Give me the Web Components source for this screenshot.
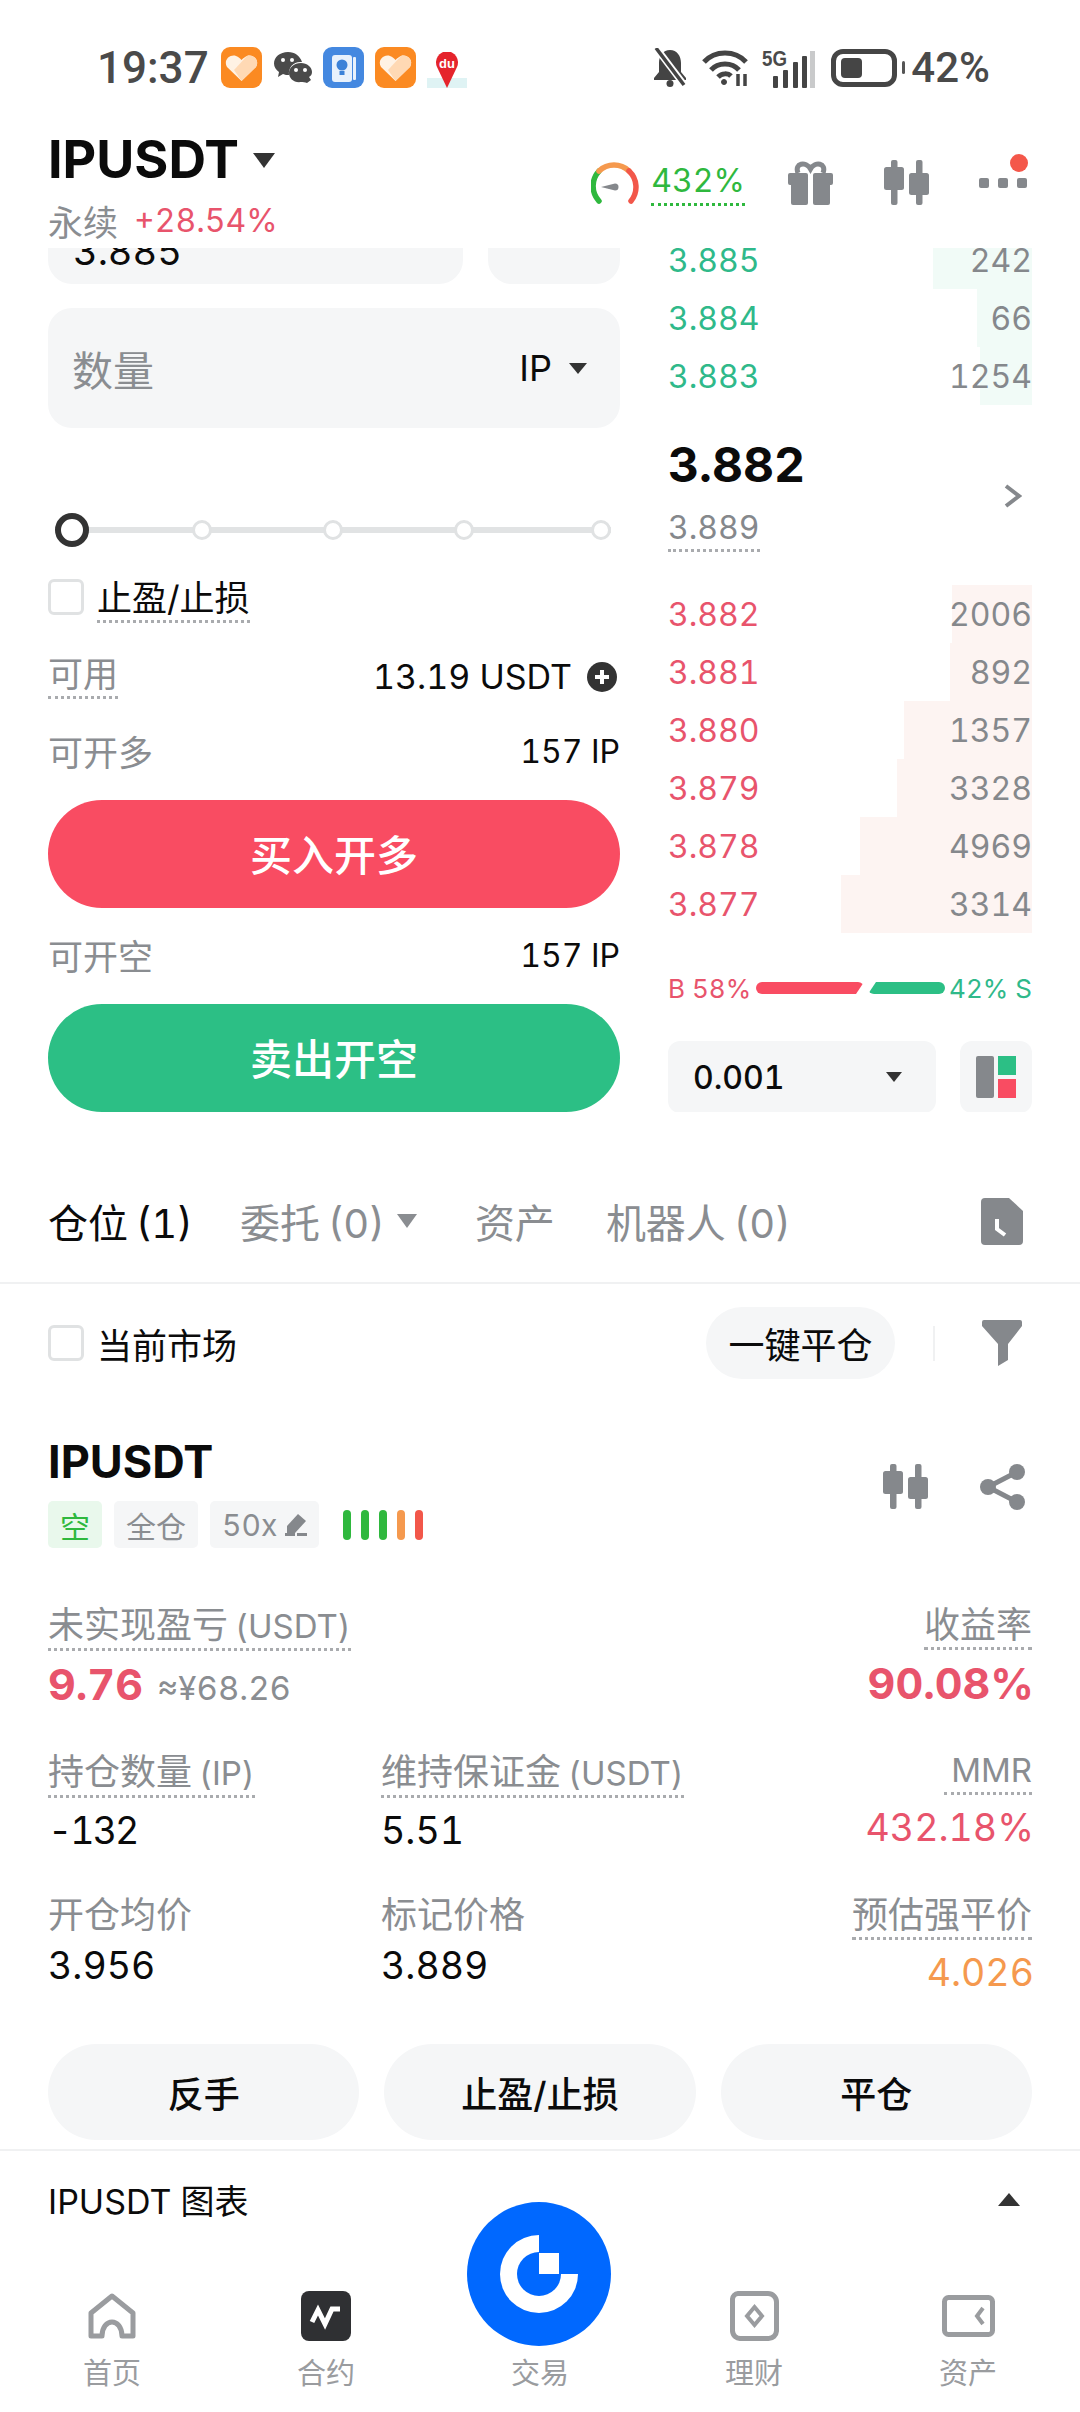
<!DOCTYPE html>
<html lang="zh">
<head>
<meta charset="utf-8">
<title>IPUSDT</title>
<style>
  html, body { margin: 0; background: #fff; }
  body {
    width: 1080px; height: 2412px; overflow: hidden;
    font-family: Inter, "Noto Sans CJK SC", sans-serif;
    font-variant-numeric: tabular-nums;
    color: #0b0b0b;
  }
</style>
</head>
<body>
<status-bar></status-bar>
<market-header></market-header>
<trade-panel>
  <trade-form slot="form"></trade-form>
  <order-book slot="book"></order-book>
</trade-panel>
<position-tabs></position-tabs>
<position-filter></position-filter>
<position-card></position-card>
<chart-toggle></chart-toggle>
<bottom-nav></bottom-nav>

<script>
const candleIcon = `<svg width="45" height="45" viewBox="0 0 45 45" fill="#85888c">
  <rect x="7" width="6.5" height="45" rx="2"/><rect y="7" width="20" height="23" rx="2.5"/>
  <rect x="32" width="6.5" height="45" rx="2"/><rect x="25" y="13" width="20" height="22" rx="2.5"/></svg>`;

const heartApp = `<svg width="41" height="41" viewBox="0 0 41 41">
  <rect width="41" height="41" rx="9" fill="#fb8a22"/>
  <path d="M20.5 34 L6 20 C2 13 9 7 15 9 C17.500 10 19 11 20.500 13 C22 11 24 10 26 9 C32 7 39 13 35 20Z" fill="#fff2e4"/>
  <path d="M20.500 34 L35 20 C39 13 32 7 26 9 L13 23Z" fill="#ffd9b4"/></svg>`;

// base class: subclasses return their shadow markup from markup()
class ShadowElement extends HTMLElement {
  constructor() {
    super();
    this.attachShadow({ mode: 'open' });
  }
  connectedCallback() {
    this.shadowRoot.innerHTML = this.markup();
  }
}

class DotLabel extends ShadowElement {
  markup() {
    return `<style>
      :host { display: inline-block; line-height: 42px; padding-bottom: 1px;
        border-bottom: 3px dotted var(--dot, #a9abae); }
    </style><slot></slot>`;
  }
}

class StatusBar extends ShadowElement {
  markup() {
    return `<style>
      :host { display: flex; height: 130px; padding: 47px 90px 0 97px; box-sizing: border-box;
        justify-content: space-between; align-items: flex-start;
        font-family: Roboto, sans-serif; font-weight: 500; font-size: 42px; color: #4a4a4a; }
      .side { display: flex; align-items: center; height: 41px; }
      .time { width: 124px; font-size: 44px; }
      .five { font: 700 22px/18px "Liberation Sans", sans-serif; transform: scaleX(.85); transform-origin: left;
        width: 24px; align-self: flex-start; margin: 3px 0 0 13px; }
      .batt { width: 66px; height: 38px; box-sizing: border-box; border: 5px solid #454545; border-radius: 12px;
        padding: 4px 5px; margin-left: 16px; }
      .batt i { display: block; width: 21px; height: 100%; background: #454545; border-radius: 4px; }
      .tip { width: 3px; height: 13px; background: #555; margin: 0 6px 0 5px; border-radius: 2px; }
      text { font: 700 13px "Liberation Sans", sans-serif; }
    </style>
    <div class="side">
      <span class="time">19:37</span>
      ${heartApp}
      <svg style="margin-left:12px" width="38" height="31" viewBox="0 0 38 31" fill="#4a4a4a">
        <path d="M14 0C6 0 0 5 0 11.500C0 15 2 18 5 20L4 25L9 22C11 23 13 23 15 23C14 15 20 9 28 10C26 4 21 0 14 0Z"/>
        <path d="M27 11C20 11 15 15.500 15 21C15 26.500 20 31 27 30C29 30 31 30 33 31L37 28L35 25C37 24 38 22 38 20C38 15 33 11 27 11Z"/>
        <g fill="#fff"><circle cx="9" cy="8" r="2"/><circle cx="18" cy="8" r="2"/><circle cx="22" cy="18" r="2"/><circle cx="31" cy="18" r="2"/></g></svg>
      <svg style="margin-left:11px" width="41" height="41" viewBox="0 0 41 41">
        <rect width="41" height="41" rx="9" fill="#4488e0"/>
        <rect x="9" y="8" width="20" height="27" rx="3" fill="#e8f1fc"/><rect x="30" y="10" width="3" height="23" rx="1" fill="#e8f1fc"/>
        <circle cx="19" cy="18" r="5.500" fill="#3c82d8"/><rect x="16.500" y="24" width="5" height="4" fill="#3c82d8"/></svg>
      <span style="margin-left:11px;display:flex">${heartApp}</span>
      <svg style="margin-left:10px;margin-top:5px" width="42" height="36" viewBox="0 0 42 36">
        <path d="M1 26H41V36H1Z" fill="#dff3f4"/>
        <path d="M21 36L11 15A11 11 0 1 1 31 15Z" fill="#e5242c"/>
        <text x="21" y="16" text-anchor="middle" fill="#fff">du</text></svg>
    </div>
    <div class="side">
      <svg width="36" height="39" viewBox="0 0 36 39" fill="#444">
        <path d="M18 2C11 2 7 8 7 15V24L2 30V32H34V30L29 24V15C29 8 25 2 18 2Z"/>
        <circle cx="18" cy="35.500" r="3.500"/>
        <path d="M5 1L33 38" stroke="#fff" stroke-width="7"/><path d="M4 0L32 37" stroke="#444" stroke-width="3.500"/></svg>
      <svg style="margin-left:14px" width="47" height="37" viewBox="0 0 47 37" fill="none" stroke="#444" stroke-width="5">
        <path d="M2 13C13 1 33 1 44 13"/><path d="M9 21C16 13 30 13 37 21"/><path d="M16 28C20 24 26 24 29 27"/>
        <circle cx="22" cy="33" r="2.500" fill="#444" stroke-width="1"/>
        <path d="M36 25V37M43 25V37" stroke-width="3.500"/></svg>
      <span class="five">5G</span>
      <svg style="margin-left:-16px;margin-top:4px" width="45" height="37" viewBox="0 0 45 37" fill="#444">
        <rect x="3" y="25" width="5" height="12" rx="1"/><rect x="13" y="19" width="5" height="18" rx="1"/>
        <rect x="23" y="11" width="5" height="26" rx="1"/><rect x="32" y="5" width="5" height="32" rx="1"/>
        <rect x="40" y="0" width="5" height="37" fill="#c9cacb"/></svg>
      <div class="batt"><i></i></div>
      <div class="tip"></div>
      <span>42%</span>
    </div>`;
  }
}

class MarketHeader extends ShadowElement {
  markup() {
    return `<style>
      :host { display: flex; height: 118px; padding: 0 48px; justify-content: space-between; align-items: flex-start; }
      .name { display: flex; align-items: center; height: 60px; font-size: 52px; font-weight: 700; line-height: 60px; }
      .name i { width: 0; height: 0; margin-left: 14px; border: 11.500px solid transparent; border-top: 15px solid #333; border-bottom: 0; }
      .sub { display: flex; align-items: center; margin-top: 5px; height: 50px; }
      .sub b { font-weight: 400; font-size: 35px; color: #8a8d91; }
      .sub span { margin-left: 16px; font-size: 32px; color: #e8546c; }
      .tools { display: flex; align-items: flex-start; margin: 30px 5px 0 0; position: relative; }
      .rate { margin-left: 12px; font-size: 32px; color: #2fb83e; --dot: #2fb83e; }
      .rate dot-label { line-height: 40px; padding-bottom: 2px; margin-top: 1px; }
      .dots { display: flex; gap: 9px; margin: 18px 0 0 50px; }
      .dots i { width: 10px; height: 10px; background: #85888c; border-radius: 2px; }
      .badge { position: absolute; right: -1px; top: -6px; width: 18px; height: 18px; border-radius: 50%; background: #f4574a; }
    </style>
    <div>
      <div class="name">IPUSDT<i></i></div>
      <div class="sub"><b>永续</b><span>+28.54%</span></div>
    </div>
    <div class="tools">
      <svg width="48" height="45" viewBox="0 0 48 45" fill="none" stroke-width="5.500" stroke-linecap="round">
        <path d="M8 41A22 22 0 0 1 8 11" stroke="#2fb83e"/>
        <path d="M8 11A22 22 0 0 1 38 11" stroke="#f5994e"/>
        <path d="M38 11A22 22 0 0 1 40 41" stroke="#f2574a"/>
        <path d="M10 27L24 23.500A3.500 3.500 0 0 1 24 30.500Z" fill="#85888c" stroke="none"/></svg>
      <div class="rate"><dot-label>432%</dot-label></div>
      <svg style="margin-left:43px" width="45" height="45" viewBox="0 0 45 45" fill="#85888c">
        <path d="M10 13C6 3 18 1 22.500 9C27 1 39 3 35 13" fill="none" stroke="#85888c" stroke-width="5"/>
        <rect y="13" width="20" height="12" rx="2"/><rect x="25" y="13" width="20" height="12" rx="2"/>
        <rect x="3" y="22" width="17" height="23" rx="2"/><rect x="25" y="22" width="17" height="23" rx="2"/></svg>
      <span style="margin-left:51px;display:flex">${candleIcon}</span>
      <div class="dots"><i></i><i></i><i></i></div>
      <div class="badge"></div>
    </div>`;
  }
}

class TradePanel extends ShadowElement {
  markup() {
    return `<style>
      :host { display: grid; grid-template-columns: 572px 364px; column-gap: 48px; height: 864px; padding: 0 48px; overflow: hidden; }
    </style>
    <slot name="form"></slot><slot name="book"></slot>`;
  }
}

class TradeForm extends ShadowElement {
  markup() {
    return `<style>
      :host { display: block; }
      .clip { display: flex; gap: 25px; height: 36px; }
      .clip div { height: 36px; background: #f5f6f7; border-radius: 0 0 24px 24px; overflow: hidden; }
      .clip .price { width: 415px; padding-left: 25px; box-sizing: border-box; font-size: 38px; line-height: 36px; }
      .clip .price span { display: block; margin-top: -15px; }
      .clip .unit { flex: 1; }
      .qty { display: flex; align-items: center; justify-content: space-between; height: 120px; margin-top: 24px;
        padding: 0 33px 0 24px; background: #f5f6f7; border-radius: 24px; font-size: 41px; color: #8a8d91; }
      .qty .ip { display: flex; align-items: center; color: #0b0b0b; font-size: 36px; }
      .qty i { margin-left: 17px; border: 9px solid transparent; border-top: 11px solid #333; border-bottom: 0; }
      .slider { display: flex; align-items: center; height: 34px;
        margin: 85px 9px 0 7px; background: linear-gradient(#e1e3e4, #e1e3e4) center / 100% 6px no-repeat; }
      .slider i { box-sizing: border-box; width: 20px; height: 20px; margin-left: 111px; border: 3px solid #e0e2e3; border-radius: 50%; background: #fff; }
      .slider i.on { width: 34px; height: 34px; margin: 0 -8px 0 0; border: 6px solid #333; }
      .slider i:last-child { margin-left: 117px; }
      .check { display: flex; align-items: center; gap: 13px; margin-top: 30px; font-size: 35px; }
      .box { width: 36px; height: 36px; box-sizing: border-box; border: 3px solid #e0e2e3; border-radius: 6px; margin-top: -6px; }
      .line { display: flex; justify-content: space-between; align-items: center; font-size: 32px; }
      .line b { font-weight: 400; color: #8a8d91; font-size: 35px; }
      .avail { margin-top: 28px; height: 50px; }
      .avail span { display: flex; align-items: center; font-size: 34px; margin-top: 1px; }
      .avail svg { margin: 0 3px 0 15px; }
      .open span { margin-top: 3px; }
      .btn { display: flex; align-items: center; justify-content: center; height: 108px; box-sizing: border-box; padding-bottom: 4px; border-radius: 54px; color: #fff; font-size: 42px; font-weight: 500; }
      .long { margin-top: 27px; background: #f94c62; }
      .short { margin-top: 27px; background: #2cbf85; }
      .line.open { height: 46px; margin-top: 26px; }
      .line.second { margin-top: 23px; }
    </style>
    <div class="clip"><div class="price"><span>3.885</span></div><div class="unit"></div></div>
    <div class="qty"><span>数量</span><span class="ip">IP<i></i></span></div>
    <div class="slider"><i class="on"></i><i></i><i></i><i></i><i></i></div>
    <div class="check"><div class="box"></div><dot-label>止盈/止损</dot-label></div>
    <div class="line avail"><b><dot-label>可用</dot-label></b>
      <span>13.19 USDT<svg width="30" height="30" viewBox="0 0 30 30"><circle cx="15" cy="15" r="15" fill="#333"/><path d="M15 8V22M8 15H22" stroke="#fff" stroke-width="4"/></svg></span></div>
    <div class="line open"><b>可开多</b><span>157 IP</span></div>
    <div class="btn long">买入开多</div>
    <div class="line open second"><b>可开空</b><span>157 IP</span></div>
    <div class="btn short">卖出开空</div>`;
  }
}

class OrderRow extends ShadowElement {
  markup() {
    const side = this.getAttribute('side');
    const depth = this.getAttribute('depth');
    const tint = side === 'ask' ? '#f1fbf7' : '#fdf4f2';
    const color = side === 'ask' ? '#2fb98a' : '#e8546c';
    return `<style>
      :host { display: flex; justify-content: space-between; align-items: center; height: 58px; font-size: 32px;
        background: linear-gradient(${tint}, ${tint}) right / ${depth}px 100% no-repeat; }
      .p { color: ${color}; }
      .q { color: #85888c; }
    </style>
    <span class="p">${this.getAttribute('price')}</span><span class="q">${this.getAttribute('qty')}</span>`;
  }
}

class OrderBook extends ShadowElement {
  markup() {
    return `<style>
      :host { display: block; overflow: hidden; }
      .asks { margin-top: -17px; }
      .mid { display: flex; justify-content: space-between; height: 180px; box-sizing: border-box; padding: 30px 10px 0 0; }
      .last { font-size: 48px; font-weight: 700; line-height: 60px; }
      .mark { margin-top: 13px; font-size: 32px; color: #85888c; }
      .mark dot-label { display: inline-block; line-height: 40px; }
      .mid svg { margin-top: 49px; }
      .ratio { display: flex; align-items: center; height: 54px; margin-top: 28px; font-size: 26px; white-space: nowrap; }
      .b { color: #e8546c; width: 88px; }
      .s { color: #2fb98a; margin-left: auto; }
      .bar { height: 12px; border-radius: 6px; }
      .bar.red { width: 108px; background: #f94c62; clip-path: polygon(0 0, 100% 0, calc(100% - 8px) 100%, 0 100%); }
      .bar.green { width: 77px; margin-left: 4px; background: #2cbf85; clip-path: polygon(8px 0, 100% 0, 100% 100%, 0 100%); }
      .tools { display: flex; gap: 24px; margin-top: 26px; }
      .tick, .layout { height: 72px; background: #f5f6f7; border-radius: 12px; display: flex; align-items: center; }
      .tick { width: 268px; box-sizing: border-box; padding: 0 34px 0 25px; justify-content: space-between; font-size: 32px; font-weight: 500; }
      .tick i { border: 8.500px solid transparent; border-top: 10px solid #333; border-bottom: 0; }
      .layout { width: 72px; justify-content: center; }
    </style>
    <div class="asks">
      <order-row side="ask" price="3.885" qty="242" depth="99"></order-row>
      <order-row side="ask" price="3.884" qty="66" depth="55"></order-row>
      <order-row side="ask" price="3.883" qty="1254" depth="52"></order-row>
    </div>
    <div class="mid">
      <div><div class="last">3.882</div><div class="mark"><dot-label>3.889</dot-label></div></div>
      <svg width="18" height="24" viewBox="0 0 18 24" fill="none" stroke="#85888c" stroke-width="4"><path d="M2 2L15 12L2 22"/></svg>
    </div>
    <div>
      <order-row side="bid" price="3.882" qty="2006" depth="80"></order-row>
      <order-row side="bid" price="3.881" qty="892" depth="82"></order-row>
      <order-row side="bid" price="3.880" qty="1357" depth="128"></order-row>
      <order-row side="bid" price="3.879" qty="3328" depth="135"></order-row>
      <order-row side="bid" price="3.878" qty="4969" depth="172"></order-row>
      <order-row side="bid" price="3.877" qty="3314" depth="191"></order-row>
    </div>
    <div class="ratio"><span class="b">B 58%</span><div class="bar red"></div><div class="bar green"></div><span class="s">42% S</span></div>
    <div class="tools">
      <div class="tick"><span>0.001</span><i></i></div>
      <div class="layout"><svg width="40" height="42" viewBox="0 0 40 42">
        <rect width="18" height="42" rx="2" fill="#85888c"/><rect x="22" width="18" height="19" fill="#2cbf85"/><rect x="22" y="23" width="18" height="19" fill="#f94c62"/></svg></div>
    </div>`;
  }
}

class PositionTabs extends ShadowElement {
  markup() {
    return `<style>
      :host { display: flex; align-items: center; height: 172px; padding: 48px 57px 0 48px; box-sizing: border-box;
        border-bottom: 2px solid #f0f1f2; font-size: 40px; word-spacing: -3px; color: #8a8d91; }
      .on { color: #0b0b0b; }
      span { white-space: nowrap; }
      i { margin: 0 58px 0 12px; border: 10.500px solid transparent; border-top: 14px solid #8a8d91; border-bottom: 0; }
      svg { margin-left: auto; }
    </style>
    <span class="on">仓位 (1)</span>
    <span style="margin-left:47px">委托 (0)</span><i></i>
    <span>资产</span>
    <span style="margin-left:51px">机器人 (0)</span>
    <svg width="42" height="47" viewBox="0 0 42 47">
      <path d="M4 0H28L42 13V43A4 4 0 0 1 38 47H4A4 4 0 0 1 0 43V4A4 4 0 0 1 4 0Z" fill="#85888c"/>
      <path d="M16 21V31L24 37" fill="none" stroke="#fff" stroke-width="4"/></svg>`;
  }
}

class PositionFilter extends ShadowElement {
  markup() {
    return `<style>
      :host { display: flex; align-items: center; height: 72px; margin-top: 23px; padding: 0 58px 0 48px; font-size: 35px; }
      .box { width: 36px; height: 36px; box-sizing: border-box; border: 3px solid #e0e2e3; border-radius: 6px; margin-right: 13px; }
      .close { margin-left: auto; height: 72px; width: 189px; border-radius: 36px; background: #f5f6f7;
        display: flex; align-items: center; justify-content: center; font-size: 36px; }
      .sep { width: 2px; height: 35px; background: #f0f1f2; margin: 0 47px 0 38px; }
    </style>
    <div class="box"></div><span>当前市场</span>
    <div class="close">一键平仓</div><div class="sep"></div>
    <svg width="40" height="46" viewBox="0 0 40 46" fill="#85888c"><path d="M0 2A2 2 0 0 1 2 0H38A2 2 0 0 1 40 2V6L26 24V40L16 46V24L0 6Z"/></svg>`;
  }
}

class PosStat extends ShadowElement {
  markup() {
    const right = this.hasAttribute('right');
    const label = this.getAttribute('label');
    const unit = this.getAttribute('unit');
    const text = unit ? `${label}<span class="u">${unit}</span>` : label;
    const cap = this.hasAttribute('dotted') ? `<dot-label>${text}</dot-label>` : text;
    return `<style>
      :host { display: flex; flex-direction: column; align-items: ${right ? 'flex-end' : 'flex-start'}; }
      .l { font-size: 36px; line-height: 42px; color: #8a8d91; white-space: nowrap; }
      .l.dot { margin-bottom: 3px; }
      .u { font-size: 33px; margin-left: 7px; }
      .v { margin: 5px ${right ? '-2px' : '0'} 0 0; line-height: 50px; font-size: var(--size, 37.5px); font-weight: var(--weight, 400);
        letter-spacing: var(--track, 0); color: var(--tone, #0b0b0b); }
    </style>
    <div class="l ${this.hasAttribute('dotted') ? 'dot' : ''}">${cap}</div>
    <div class="v">${this.getAttribute('value')}<slot></slot></div>`;
  }
}

class PositionCard extends ShadowElement {
  markup() {
    return `<style>
      :host { display: block; padding: 56px 48px 0; }
      .top { display: flex; justify-content: space-between; }
      .name { font-size: 45px; font-weight: 700; line-height: 54px; }
      .tags { display: flex; gap: 12px; align-items: center; margin-top: 12px; }
      .tag { height: 47px; display: flex; align-items: center; padding: 0 12px; border-radius: 5px; background: #f5f6f7; color: #8a8d91; font-size: 30px; box-sizing: border-box; }
      .tag.side { background: #e9f8ec; color: #2fb83e; width: 54px; }
      .tag svg { margin-left: 8px; }
      .lights { display: flex; gap: 10px; margin-left: 12px; }
      .lights i { width: 8px; height: 30px; border-radius: 4px; background: #2fb83e; }
      .icons { display: flex; gap: 52px; margin: 29px 7px 0 0; }
      .stats { display: grid; grid-template-columns: 333px 1fr auto; grid-template-rows: 147px 143px 104px; margin-top: 56px; }
      .red { --tone: #e8546c; }
      .big { --size: 43px; --weight: 700; }
      .orange { --tone: #f5994e; }
      .tight { --track: -2px; }
      .actions { display: flex; gap: 25px; margin-top: 46px; }
      .actions div { flex: 1; height: 96px; border-radius: 48px; background: #f5f6f7; display: flex; align-items: center; justify-content: center; font-size: 36px; font-weight: 500; }
      .mmr { margin-top: -3px; }
      .cny { font-size: 33px; font-weight: 400; letter-spacing: 0; color: #8a8d91; margin-left: 14px; }
    </style>
    <div class="top">
      <div>
        <div class="name">IPUSDT</div>
        <div class="tags">
          <div class="tag side">空</div><div class="tag">全仓</div>
          <div class="tag">50x<svg width="22" height="22" viewBox="0 0 22 22" fill="#85888c"><path d="M13 0L21 7L10 19H2V12Z"/><rect x="12" y="19" width="10" height="3"/><rect x="0" y="19" width="10" height="3"/></svg></div>
          <div class="lights"><i></i><i></i><i></i><i style="background:#f5994e"></i><i style="background:#f2574a"></i></div>
        </div>
      </div>
      <div class="icons">${candleIcon}
        <svg width="45" height="46" viewBox="0 0 45 46" fill="#85888c"><path d="M37 8L8 23L37 38" fill="none" stroke="#85888c" stroke-width="5"/><circle cx="37" cy="8" r="8"/><circle cx="8" cy="23" r="8"/><circle cx="37" cy="38" r="8"/></svg>
      </div>
    </div>
    <div class="stats">
      <pos-stat class="red big" dotted label="未实现盈亏" unit="(USDT)" value="9.76"><span class="cny">≈¥68.26</span></pos-stat>
      <div></div>
      <pos-stat class="red big" right dotted label="收益率" value="90.08%"></pos-stat>
      <pos-stat class="tight" dotted label="持仓数量" unit="(IP)" value="-132"></pos-stat>
      <pos-stat dotted label="维持保证金" unit="(USDT)" value="5.51"></pos-stat>
      <pos-stat class="red mmr" right dotted label="" unit="MMR" value="432.18%"></pos-stat>
      <pos-stat label="开仓均价" value="3.956"></pos-stat>
      <pos-stat label="标记价格" value="3.889"></pos-stat>
      <pos-stat class="orange" right dotted label="预估强平价" value="4.026"></pos-stat>
    </div>
    <div class="actions"><div>反手</div><div>止盈/止损</div><div>平仓</div></div>`;
  }
}

class ChartToggle extends ShadowElement {
  markup() {
    return `<style>
      :host { display: flex; justify-content: space-between; align-items: center; height: 96px; margin-top: 9px;
        padding: 0 60px 0 48px; border-top: 2px solid #f0f1f2; font-size: 34px; }
      i { border: 11.500px solid transparent; border-bottom: 13px solid #333; border-top: 0; }
    </style>
    <span>IPUSDT 图表</span><i></i>`;
  }
}

class NavItem extends ShadowElement {
  markup() {
    return `<style>
      :host { display: flex; flex-direction: column; align-items: center; justify-content: flex-end; height: 149px; font-size: 29px; color: #9a9c9f; }
      .icon { height: 50px; display: flex; align-items: center; margin-bottom: 11px; }
      .label { line-height: 44px; }
    </style>
    <div class="icon"><slot></slot></div><div class="label">${this.getAttribute('label')}</div>`;
  }
}

class BottomNav extends ShadowElement {
  markup() {
    return `<style>
      :host { display: grid; grid-template-columns: repeat(5, 214px); height: 164px; padding: 0 5px; position: relative; }
      .fab { position: absolute; left: 467px; top: -45px; }
    </style>
    <nav-item label="首页"><svg width="48" height="46" viewBox="0 0 48 46" fill="none" stroke="#9a9c9f" stroke-width="5" stroke-linejoin="round">
      <path d="M24 3L45 20V43H34C34 34 29 29 24 29C19 29 14 34 14 43H3V20Z"/></svg></nav-item>
    <nav-item label="合约"><svg width="50" height="50" viewBox="0 0 50 50">
      <rect width="50" height="50" rx="8" fill="#2f3033"/>
      <path d="M11 31L17 19L24 33L31 18H39" fill="none" stroke="#fff" stroke-width="5"/></svg></nav-item>
    <nav-item label="交易"><svg width="1" height="50"></svg></nav-item>
    <nav-item label="理财"><svg width="49" height="50" viewBox="0 0 49 50" fill="none" stroke="#9a9c9f" stroke-width="5">
      <path d="M8 2.500H38A8.500 8.500 0 0 1 46.500 11V40A8 8 0 0 1 38.500 47.500H11A8 8 0 0 1 2.500 40V8A6 6 0 0 1 8 2.500Z"/>
      <path d="M24.500 16L32 25L24.500 34L17 25Z" stroke-width="4"/></svg></nav-item>
    <nav-item label="资产"><svg width="53" height="42" viewBox="0 0 53 42" fill="none" stroke="#9a9c9f" stroke-width="5">
      <rect x="2.500" y="2.500" width="48" height="37" rx="4"/>
      <path d="M41 13L35 21L41 29" stroke-width="4"/></svg></nav-item>
    <svg class="fab" width="144" height="144" viewBox="0 0 144 144">
      <circle cx="72" cy="72" r="72" fill="#0068ff"/>
      <circle cx="72" cy="72" r="39" fill="#fff"/>
      <rect x="72" y="30" width="42" height="42" fill="#0068ff"/>
      <circle cx="72" cy="72" r="22" fill="#0068ff"/>
      <rect x="72" y="51" width="20" height="21" fill="#fff"/>
    </svg>`;
  }
}

customElements.define('dot-label', DotLabel);
customElements.define('status-bar', StatusBar);
customElements.define('market-header', MarketHeader);
customElements.define('trade-panel', TradePanel);
customElements.define('trade-form', TradeForm);
customElements.define('order-row', OrderRow);
customElements.define('order-book', OrderBook);
customElements.define('position-tabs', PositionTabs);
customElements.define('position-filter', PositionFilter);
customElements.define('pos-stat', PosStat);
customElements.define('position-card', PositionCard);
customElements.define('chart-toggle', ChartToggle);
customElements.define('nav-item', NavItem);
customElements.define('bottom-nav', BottomNav);
</script>
</body>
</html>
